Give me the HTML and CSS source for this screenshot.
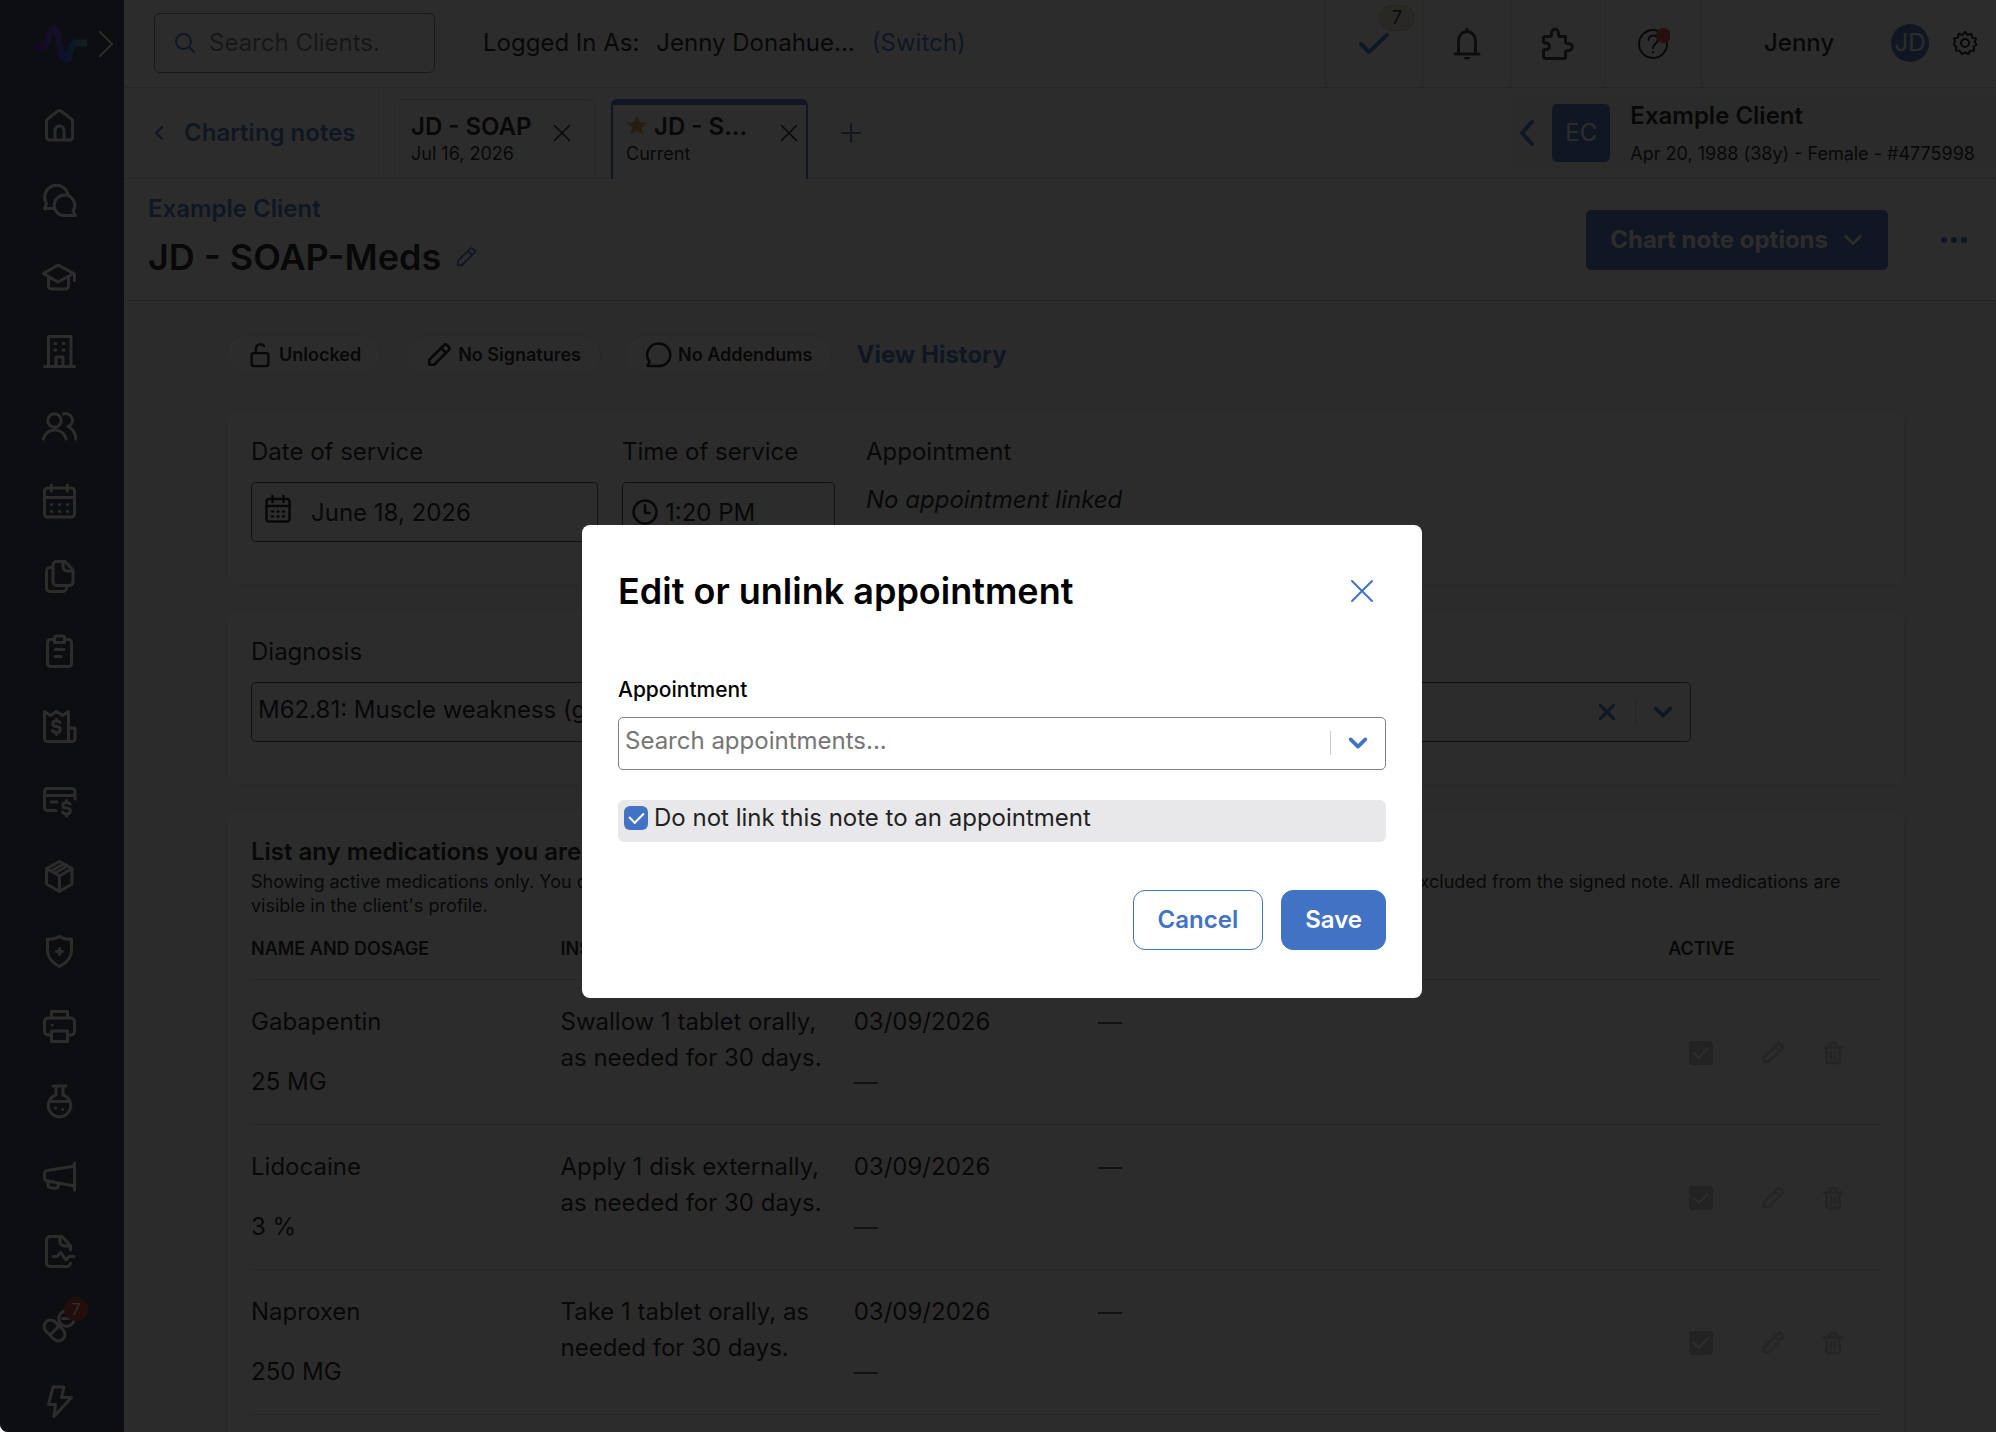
FILE: index.html
```html
<!DOCTYPE html>
<html lang="en">
<head>
    <meta charset="UTF-8">
    <title>JD - SOAP-Meds</title>
    <link rel="stylesheet" href="styles.css">
</head>
<body>
    <svg class="sprite" aria-hidden="true">
        <symbol id="pencil" viewBox="0 0 24 24"><path d="M3 21v-4.5L16.5 3a2.2 2.2 0 0 1 3 0l1.500 1.500a2.200 2.200 0 0 1 0 3L7.500 21zM14 5.500l4.500 4.500"/></symbol>
        <symbol id="trash" viewBox="0 0 24 24"><path d="M3 6.500h18M8 6.500V5a3 3 0 0 1 3-3h2a3 3 0 0 1 3 3v1.500M5.500 6.500V20a2 2 0 0 0 2 2h9a2 2 0 0 0 2-2V6.500M10 11v7M14 11v7"/></symbol>
        <symbol id="close" viewBox="0 0 24 24"><path d="M2 2l20 20M22 2L2 22"/></symbol>
        <symbol id="down" viewBox="0 0 24 24"><path d="M4 8l8 8 8-8"/></symbol>
        <symbol id="left" viewBox="0 0 24 24"><path d="M17 2L7 12l10 10"/></symbol>
    </svg>

    <div class="app">
        <aside class="sidebar">
            <div class="brand">
                <svg class="logo" viewBox="0 0 54 40">
                    <defs>
                        <linearGradient id="pulse" x1="0" y1="0" x2="1" y2="0">
                            <stop offset="0" stop-color="#5a14c8"/>
                            <stop offset=".4" stop-color="#6a3ad8"/>
                            <stop offset=".6" stop-color="#2450e8"/>
                            <stop offset="1" stop-color="#3cb4c0"/>
                        </linearGradient>
                    </defs>
                    <path d="M4 22.500h4c6 0 6-4 8-11 2-9 7-9 9 0l4 19c1 7 6 7 7 0 2-9 3-11.500 8-11.500h7" fill="none" stroke="url(#pulse)" stroke-width="7" stroke-linecap="round" stroke-linejoin="round"/>
                </svg>
                <svg class="expand" viewBox="0 0 14 26"><path d="M1 1l12 12L1 25"/></svg>
            </div>
            <nav class="nav">
                <a href="#" aria-label="Home"><svg viewBox="0 0 36 36"><path d="M5.500 29V13.500c0-1 .4-2 1.300-2.600L16.800 3a2.500 2.500 0 0 1 3 0l10.600 7.900c.8.6 1.200 1.500 1.200 2.600V29a3 3 0 0 1-3 3H8.500a3 3 0 0 1-3-3zM14 32V22.500a4.500 4.500 0 0 1 9 0V32"/></svg></a>
                <a href="#" aria-label="Messages"><svg viewBox="0 0 36 36"><path d="M26.500 10A11.800 11.800 0 1 0 5.500 20.500L3.500 25.500H12"/><path d="M23.500 12a10.300 10.300 0 1 0 0 20.600H34.500l-2.500-4.500a10.300 10.300 0 0 0-8.500-16.100z"/></svg></a>
                <a href="#" aria-label="Programs"><svg viewBox="0 0 36 36"><path d="M2.500 15.500L17 7l15.500 8.500L17 24zM7.500 19v9a3 3 0 0 0 3 3h14a3 3 0 0 0 3-3v-9M32.500 15.500q1 0 1 1.500v5.500"/></svg></a>
                <a href="#" aria-label="Organization"><svg viewBox="0 0 36 36"><path d="M7.500 33.500v-30h22.500v30M3.500 33.500h30M15 33.500V24h7v9.500M14 10.500h1M22 10.500h1M14 17h1M22 17h1"/></svg></a>
                <a href="#" aria-label="Clients"><svg viewBox="0 0 36 36"><circle cx="13.500" cy="12.500" r="6.700"/><path d="M2.500 31a11.500 11.500 0 0 1 22.500 0M22.500 6a6.500 6.500 0 0 1 4.500 12.500c4 2 7.500 6.500 8 12.500"/></svg></a>
                <a href="#" aria-label="Calendar"><svg viewBox="0 0 36 36"><rect x="3.500" y="5" width="30" height="29" rx="3"/><path d="M3.500 14.500h30M10.500 2v6M26.500 2v6M10.500 21.500h.1M18.500 21.500h.1M26.500 21.500h.1M10.500 28.500h.1M18.500 28.500h.1M26.500 28.500h.1"/></svg></a>
                <a href="#" aria-label="Documents"><svg viewBox="0 0 36 36"><path d="M15.500 3.500H24l8 8.500v12a3.500 3.500 0 0 1-3.500 3.500h-13A3.500 3.500 0 0 1 12 24V7a3.500 3.500 0 0 1 3.500-3.500zM22 4v4.500a4.500 4.500 0 0 0 4.500 4.500H32M12 9.500H9A3.500 3.500 0 0 0 5.500 13v17A3.500 3.500 0 0 0 9 33.500h13a3.500 3.500 0 0 0 3.500-3.500v-2"/></svg></a>
                <a href="#" aria-label="Forms"><svg viewBox="0 0 36 36"><path d="M13 6.500h-3.500a3 3 0 0 0-3 3v21a3 3 0 0 0 3 3h18a3 3 0 0 0 3-3v-21a3 3 0 0 0-3-3H24M14 16.500h9M14 23.500h6"/><path d="M15.500 3h6a2 2 0 0 1 2 2v4.500h-10V5a2 2 0 0 1 2-2z"/></svg></a>
                <a href="#" aria-label="Billing"><svg viewBox="0 0 36 36"><path d="M3.500 3.500l6 4 6-4 6 4 6-4v30H6.500a3 3 0 0 1-3-3zM27.500 20h6.500v10.500a3 3 0 0 1-3 3h-3.500M19 14.500q-1-1.500-3.500-1.500c-5 0-5 5.500 0 5.500s5 6 0 6q-3 0-4-2M15.500 11v2M15.500 24.500v2"/></svg></a>
                <a href="#" aria-label="Payments"><svg viewBox="0 0 36 36"><path d="M34 16V8.500a3 3 0 0 0-3-3H6.500a3 3 0 0 0-3 3v16a3 3 0 0 0 3 3H15M3.500 12.500H34M10 19h6M29 21q-1-1.500-3.500-1.500c-5 0-5 5.500 0 5.500s5 6 0 6q-3 0-4-2M25.500 17.500v2M25.500 31v2"/></svg></a>
                <a href="#" aria-label="Products"><svg viewBox="0 0 36 36"><path d="M18.500 3.500L31 10.500v15.500l-12.500 7.500L5.500 26V10.500zM5.500 10.500l13 7.500L31 10.500M18.500 18v15.500M10 13l12.500-7M14 15l12.500-7"/></svg></a>
                <a href="#" aria-label="Insurance"><svg viewBox="0 0 36 36"><path d="M18.500 3.500c3 2 7.500 3 12 2.500V17c0 8-5 13-12 16.500C11.500 30 6.500 25 6.500 17V6c4.500.5 9-.5 12-2.500zM18.500 15.500v6M15.500 18.500h6"/></svg></a>
                <a href="#" aria-label="Fax"><svg viewBox="0 0 36 36"><path d="M10.500 10V3.500h16V10M10.500 27H7a3.500 3.500 0 0 1-3.500-3.500v-10A3.500 3.500 0 0 1 7 10h23a3.500 3.500 0 0 1 3.500 3.500v10A3.500 3.500 0 0 1 30 27h-3.500M10.500 23h16v10.500h-16z"/><path d="M11 17h.1"/></svg></a>
                <a href="#" aria-label="Labs"><svg viewBox="0 0 36 36"><path d="M12 3h13M15 3v9a11.200 11.200 0 1 0 7 0V3M8 18.500h21M14.500 25h.1M21.500 26.500h.1"/></svg></a>
                <a href="#" aria-label="Campaigns"><svg viewBox="0 0 36 36"><path d="M33.500 5v27M33.500 8L6.500 12.500a3 3 0 0 0-3 3V20a3 3 0 0 0 3 3l27 5M7 23v4a2.500 2.500 0 0 0 2 2.500l5 .8c2 .3 3.500-1 3.500-3V25"/></svg></a>
                <a href="#" aria-label="Reports"><svg viewBox="0 0 36 36"><path d="M29.500 30.500c-.5 2-2 3-4 3H9A3.500 3.500 0 0 1 5.500 30V7A3.500 3.500 0 0 1 9 3.500h12l8.500 9V17M19 4v4.500a4.500 4.500 0 0 0 4.500 4.500h6M12 23.500h4l3.500-4 5.500 7.500 3-3.500h5"/></svg></a>
                <a href="#" aria-label="Prescriptions">
                    <svg viewBox="0 0 36 36"><circle cx="25.500" cy="10.500" r="7.800"/><path d="M21.500 10.500h8"/><rect class="capsule" x="1.500" y="16" width="24" height="13" rx="6.500" transform="rotate(45 13.500 22.500)"/><path d="M18 18L9 27"/></svg>
                    <span class="nav-badge">7</span>
                </a>
                <a href="#" aria-label="Automations"><svg viewBox="0 0 36 36"><path d="M12 4h11l-2.500 10.500H30.500L13 33.500l1.500-12H7.500z"/></svg></a>
            </nav>
        </aside>

        <div class="page">
            <header class="topbar">
                <label class="search">
                    <svg viewBox="0 0 20 20"><circle cx="8.500" cy="8.500" r="7.500"/><path d="M14 14l5 5"/></svg>
                    <input type="search" placeholder="Search Clients." aria-label="Search Clients">
                </label>
                <p class="logged">
                    <span>Logged In As:</span>
                    <span>Jenny Donahue...</span>
                    <a href="#">(Switch)</a>
                </p>
                <div class="tools">
                    <button class="tool tasks" aria-label="Tasks">
                        <svg viewBox="0 0 32 24"><path d="M3 12l8 8L29 3"/></svg>
                        <span class="task-badge">7</span>
                    </button>
                    <button class="tool bell" aria-label="Notifications">
                        <svg viewBox="0 0 28 34"><path d="M2 27h24M5.500 26V14a8.500 9.500 0 0 1 17 0v12M14 2v2"/><path class="solid" d="M10.500 30h7a3.500 2.500 0 0 1-7 0z"/></svg>
                    </button>
                    <button class="tool puzzle" aria-label="Integrations">
                        <svg viewBox="0 0 34 34"><path d="M4 9.500h5c1.500 0 1.500-1 1.500-3 0-6 7-6 7 0 0 2 0 3 1.500 3h5.500v5c0 1.500 1 2 3 2 5 0 5 7 0 7-2 0-3 .5-3 2v4.500q0 1.500-1.500 1.500H4.500Q2.500 31.500 2.500 29.500V24c0-2 1-1.500 2.500-1.500 4.500 0 4.500-6.500 0-6.500-1.500 0-2.500 0-2.500-2v-3q0-1.500 1.500-1.500z"/></svg>
                    </button>
                    <button class="tool help" aria-label="Help">
                        <svg viewBox="0 0 34 34"><circle cx="17" cy="17" r="14"/><path d="M12.500 13c0-6 9.500-6 9.500-.5 0 4-5 4-5 8.500M17 25v.5"/><circle class="dot" cx="27.500" cy="8.500" r="7.500"/></svg>
                    </button>
                </div>
                <div class="user">
                    <span class="user-name">Jenny</span>
                    <span class="user-avatar">JD</span>
                    <svg class="gear" viewBox="0 0 24 24"><path d="M12 1l2.500 3 3.800-1.200.9 3.900 3.800.8-1.200 3.500 2 2.500-3 2 .2 4-3.700.3-2 3.200L12 21.300 8.700 23l-2-3.200-3.700-.3.200-4-3-2 2-2.500L1 7.500l3.800-.8.900-3.900L9.500 4z"/><circle cx="12" cy="12" r="4"/></svg>
                </div>
            </header>

            <div class="tabbar">
                <a class="back" href="#">
                    <svg viewBox="0 0 24 24"><use href="#left"/></svg>
                    Charting notes
                </a>
                <div class="tab">
                    <div><strong>JD - SOAP</strong><small>Jul 16, 2026</small></div>
                    <button aria-label="Close tab"><svg viewBox="0 0 24 24"><use href="#close"/></svg></button>
                </div>
                <div class="tab active">
                    <div>
                        <strong>
                            <svg class="star" viewBox="0 0 22 20"><path d="M11 0l2.800 7.300 8.200.4-6.400 4.800L17.800 20 11 15.800 4.200 20l2.200-7.500L0 7.700l8.200-.4z"/></svg>
                            JD - S...
                        </strong>
                        <small>Current</small>
                    </div>
                    <button aria-label="Close tab"><svg viewBox="0 0 24 24"><use href="#close"/></svg></button>
                </div>
                <button class="add" aria-label="Add tab"><svg viewBox="0 0 20 20"><path d="M10 1v18M1 10h18"/></svg></button>
                <div class="client">
                    <svg class="client-arrow" viewBox="0 0 16 26"><path d="M13 2L3 13l10 11"/></svg>
                    <span class="client-avatar">EC</span>
                    <div class="client-info">
                        <strong>Example Client</strong>
                        <small>Apr 20, 1988 (38y) - Female - #4775998</small>
                    </div>
                </div>
            </div>

            <div class="note-header">
                <div class="note-title">
                    <a class="crumb" href="#">Example Client</a>
                    <h1>JD - SOAP-Meds <svg viewBox="0 0 24 24"><use href="#pencil"/></svg></h1>
                </div>
                <button class="options">Chart note options <svg viewBox="0 0 24 24"><use href="#down"/></svg></button>
                <button class="more" aria-label="More"><svg viewBox="0 0 28 8"><circle cx="4" cy="4" r="3"/><circle cx="14" cy="4" r="3"/><circle cx="24" cy="4" r="3"/></svg></button>
            </div>

            <main class="content">
                <div class="status">
                    <span class="pill"><svg viewBox="0 0 24 28"><rect x="3" y="12" width="18" height="14" rx="2.500"/><path d="M7.500 12V7.500a5 5 0 0 1 9-3"/></svg>Unlocked</span>
                    <span class="pill"><svg viewBox="0 0 24 24"><use href="#pencil"/></svg>No Signatures</span>
                    <span class="pill"><svg viewBox="0 0 26 26"><path d="M13 1.500a11.300 11.300 0 1 1 0 22.600H1.500l2-4.500A11.300 11.300 0 0 1 13 1.500z"/></svg>No Addendums</span>
                    <a href="#">View History</a>
                </div>

                <section class="card service">
                    <div class="field date">
                        <label for="date">Date of service</label>
                        <div class="box">
                            <svg viewBox="0 0 26 28"><rect x="1.500" y="4" width="23" height="22.500" rx="2.500"/><path d="M1.500 11h23M7.500 1v6M18.500 1v6M7 16.500h1M12.500 16.500h1M18 16.500h1M7 21.500h1M12.500 21.500h1M18 21.500h1"/></svg>
                            <input id="date" type="text" value="June 18, 2026">
                        </div>
                    </div>
                    <div class="field time">
                        <label for="time">Time of service</label>
                        <div class="box">
                            <svg viewBox="0 0 26 26"><circle cx="13" cy="13" r="11.500"/><path d="M13 6v8h4.500"/></svg>
                            <input id="time" type="text" value="1:20 PM">
                        </div>
                    </div>
                    <div class="field">
                        <span>Appointment</span>
                        <em>No appointment linked</em>
                    </div>
                </section>

                <section class="card">
                    <div class="field diagnosis">
                        <label for="diagnosis">Diagnosis</label>
                        <div class="dropdown">
                            <select id="diagnosis"><option>M62.81: Muscle weakness (generalized)</option></select>
                            <button aria-label="Clear diagnosis"><svg viewBox="0 0 24 24"><use href="#close"/></svg></button>
                            <span class="divider"></span>
                            <svg class="arrow" viewBox="0 0 24 24"><use href="#down"/></svg>
                        </div>
                    </div>
                </section>

                <section class="card">
                    <h2>List any medications you are currently taking</h2>
                    <p class="hint">Showing active medications only. You can also add, edit or remove medications from this list at any time. All inactive medications will be excluded from the signed note. All medications are visible in the client's profile.</p>
                    <table class="meds">
                        <thead>
                            <tr>
                                <th class="col-name">Name and dosage</th>
                                <th class="col-instructions">Instructions</th>
                                <th class="col-dates">Dates</th>
                                <th class="col-comments">Comments</th>
                                <th class="col-active">Active</th>
                                <th></th>
                            </tr>
                        </thead>
                        <tbody>
                            <tr>
                                <td><p>Gabapentin</p><p>25 MG</p></td>
                                <td>Swallow 1 tablet orally, as needed for 30 days.</td>
                                <td><p>03/09/2026</p><p class="empty">—</p></td>
                                <td class="empty">—</td>
                                <td class="col-active"><input type="checkbox" aria-label="Gabapentin active" checked disabled></td>
                                <td class="actions"><button aria-label="Edit"><svg viewBox="0 0 24 24"><use href="#pencil"/></svg></button><button aria-label="Delete"><svg viewBox="0 0 24 24"><use href="#trash"/></svg></button></td>
                            </tr>
                            <tr>
                                <td><p>Lidocaine</p><p>3 %</p></td>
                                <td>Apply 1 disk externally, as needed for 30 days.</td>
                                <td><p>03/09/2026</p><p class="empty">—</p></td>
                                <td class="empty">—</td>
                                <td class="col-active"><input type="checkbox" aria-label="Lidocaine active" checked disabled></td>
                                <td class="actions"><button aria-label="Edit"><svg viewBox="0 0 24 24"><use href="#pencil"/></svg></button><button aria-label="Delete"><svg viewBox="0 0 24 24"><use href="#trash"/></svg></button></td>
                            </tr>
                            <tr>
                                <td><p>Naproxen</p><p>250 MG</p></td>
                                <td>Take 1 tablet orally, as needed for 30 days.</td>
                                <td><p>03/09/2026</p><p class="empty">—</p></td>
                                <td class="empty">—</td>
                                <td class="col-active"><input type="checkbox" aria-label="Naproxen active" checked disabled></td>
                                <td class="actions"><button aria-label="Edit"><svg viewBox="0 0 24 24"><use href="#pencil"/></svg></button><button aria-label="Delete"><svg viewBox="0 0 24 24"><use href="#trash"/></svg></button></td>
                            </tr>
                        </tbody>
                    </table>
                </section>
            </main>
        </div>
    </div>

    <div class="overlay">
        <form class="modal" role="dialog" aria-labelledby="modal-title">
            <div class="modal-head">
                <h2 id="modal-title">Edit or unlink appointment</h2>
                <button type="button" aria-label="Close"><svg viewBox="0 0 24 24"><use href="#close"/></svg></button>
            </div>
            <label class="modal-label" for="appointment">Appointment</label>
            <div class="dropdown">
                <select id="appointment"><option>Search appointments...</option></select>
                <span class="divider"></span>
                <svg class="arrow" viewBox="0 0 24 24"><use href="#down"/></svg>
            </div>
            <label class="unlink"><input type="checkbox" checked> Do not link this note to an appointment</label>
            <div class="modal-actions">
                <button type="button" class="cancel">Cancel</button>
                <button type="submit" class="save">Save</button>
            </div>
        </form>
    </div>
</body>
</html>
```
FILE: styles.css
```css
* {
    box-sizing: border-box;
}

body {
    margin: 0;
    height: 100vh;
    overflow: hidden;
    font-family: Inter, sans-serif;
    font-size: 24px;
    line-height: 36px;
    color: #111;
    background-color: #fff;
}

h1, h2, p {
    margin: 0;
}

a {
    color: #4272c3;
    text-decoration: none;
}

button, input, select {
    font: inherit;
    color: inherit;
}

button {
    display: flex;
    align-items: center;
    justify-content: center;
    padding: 0;
    border: none;
    background: none;
    cursor: pointer;
}

small {
    font-size: 18px;
    line-height: 24px;
}

strong {
    font-weight: 600;
}

svg {
    flex: none;
    fill: none;
    stroke: currentColor;
    stroke-width: 2;
    stroke-linecap: round;
    stroke-linejoin: round;
}

.sprite {
    display: none;
}

.app {
    display: flex;
    height: 100%;
    overflow: hidden;
}

/* Sidebar */
.sidebar {
    flex: none;
    width: 124px;
    background-color: #2e3650;
    border-bottom-left-radius: 8px;
    color: #fff;
}

.brand {
    display: flex;
    align-items: center;
    justify-content: flex-end;
    gap: 12px;
    height: 88px;
    padding-right: 11px;
}

.logo {
    width: 54px;
    height: 40px;
}

.expand {
    width: 14px;
    height: 26px;
}

.nav {
    display: flex;
    flex-direction: column;
    align-items: center;
    gap: 39px;
    padding: 20px 6px 0 0;
}

.nav a {
    position: relative;
    height: 36px;
    color: #fff;
}

.nav svg {
    width: 36px;
    height: 36px;
    stroke-width: 3;
}

.nav .capsule {
    fill: #2e3650;
}

.nav-badge {
    position: absolute;
    top: -11px;
    right: -11px;
    width: 24px;
    height: 24px;
    border-radius: 50%;
    background-color: #c8372f;
    font-size: 16px;
    line-height: 24px;
    text-align: center;
}

/* Top bar */
.page {
    flex: 1;
    min-width: 0;
    display: flex;
    flex-direction: column;
}

.topbar {
    flex: none;
    display: flex;
    height: 88px;
    border-bottom: 1px solid #d8d8d8;
}

.search {
    display: flex;
    align-items: center;
    gap: 14px;
    width: 281px;
    height: 60px;
    margin: 13px 0 0 30px;
    padding: 0 20px;
    border: 1px solid #858585;
    border-radius: 6px;
}

.search svg {
    width: 20px;
    height: 20px;
    color: #4272c3;
}

.search input {
    width: 100%;
    min-width: 0;
    padding: 0;
    border: none;
    outline: none;
    background: none;
}

.search input::placeholder {
    color: #757575;
}

.logged {
    display: flex;
    align-items: center;
    gap: 17px;
    margin-left: 48px;
    padding-bottom: 2px;
}

.tools {
    display: flex;
    margin-left: auto;
}

.tool {
    position: relative;
    border-left: 1px solid #d8d8d8;
    color: #2e3448;
}

.tasks {
    width: 97px;
    color: #4272c3;
}

.tasks svg {
    width: 32px;
    height: 24px;
    stroke-width: 4;
}

.task-badge {
    position: absolute;
    top: 5px;
    right: 7px;
    width: 36px;
    height: 26px;
    border: 1px solid #d8c8a4;
    border-radius: 13px;
    background-color: #efe2c6;
    color: #222;
    font-size: 18px;
    line-height: 24px;
}

.bell {
    width: 88px;
}

.bell svg {
    width: 28px;
    height: 34px;
    stroke-width: 3;
}

.bell .solid {
    fill: currentColor;
    stroke: none;
}

.puzzle {
    width: 94px;
}

.puzzle svg {
    width: 34px;
    height: 34px;
    stroke-width: 3;
}

.help {
    width: 97px;
    color: #111;
}

.help svg {
    width: 34px;
    height: 34px;
}

.help .dot {
    fill: #d9363e;
    stroke: none;
}

.user {
    display: flex;
    align-items: center;
    width: 295px;
    padding: 0 19px 2px 62px;
    border-left: 1px solid #d8d8d8;
}

.user-name {
    margin-right: auto;
    font-weight: 500;
}

.user-avatar {
    width: 38px;
    height: 38px;
    margin-right: 24px;
    border-radius: 50%;
    background-color: #4272c3;
    color: #fff;
    line-height: 38px;
    text-align: center;
}

.gear {
    width: 24px;
    height: 24px;
}

/* Tabs */
.tabbar {
    flex: none;
    display: flex;
    align-items: flex-end;
    height: 91px;
    border-bottom: 1px solid #d8d8d8;
}

.back {
    display: flex;
    align-items: center;
    gap: 17px;
    width: 256px;
    height: 90px;
    padding-left: 27px;
    border-right: 1px solid #d8d8d8;
    font-weight: 600;
}

.back svg {
    width: 16px;
    height: 14px;
    stroke-width: 4;
}

.tab {
    display: flex;
    align-items: flex-start;
    justify-content: space-between;
    width: 200px;
    height: 79px;
    margin-left: 15px;
    padding: 12px 23px 0 15px;
    border: 1px solid #d8d8d8;
    border-bottom: none;
    border-radius: 6px 6px 0 0;
}

.tab strong, .tab small {
    display: block;
}

.tab strong {
    line-height: 30px;
}

.tab button {
    margin-top: 12px;
}

.tab button svg {
    width: 18px;
    height: 18px;
}

.tab.active {
    width: 197px;
    height: 80px;
    margin: 0 0 -1px 16px;
    padding: 7px 8px 0 13px;
    border: 2px solid #4272c3;
    border-top-width: 6px;
    border-bottom: none;
    background-color: #fff;
}

.tab .star {
    width: 22px;
    height: 20px;
    fill: #cfa04a;
    stroke: none;
}

.add {
    height: 90px;
    margin-left: 33px;
    color: #4272c3;
}

.add svg {
    width: 20px;
    height: 20px;
}

.client {
    display: flex;
    align-items: center;
    height: 84px;
    margin: 0 0 3px auto;
    padding: 0 21px 0 8px;
    background-color: #f7f7f7;
}

.client-arrow {
    width: 16px;
    height: 26px;
    color: #4272c3;
    stroke-width: 4;
}

.client-avatar {
    width: 58px;
    height: 58px;
    margin: 0 20px 0 17px;
    border-radius: 5px;
    background-color: #4272c3;
    color: #fff;
    line-height: 58px;
    text-align: center;
}

.client-info {
    padding-bottom: 3px;
}

.client-info strong, .client-info small {
    display: block;
}

.client-info small {
    margin-top: 8px;
}

/* Note header */
.note-header {
    flex: none;
    display: flex;
    align-items: center;
    height: 122px;
    padding: 0 28px 0 24px;
    border-bottom: 1px solid #d8d8d8;
}

.note-title {
    padding-bottom: 7px;
}

.crumb {
    display: block;
    font-weight: 600;
}

.note-header h1 {
    display: flex;
    align-items: center;
    gap: 14px;
    margin-top: 6px;
    font-size: 36px;
    line-height: 48px;
    font-weight: 600;
}

.note-header h1 svg {
    width: 22px;
    height: 22px;
    color: #4272c3;
}

.options {
    gap: 14px;
    height: 60px;
    margin-left: auto;
    padding: 0 24px;
    border-radius: 5px;
    background-color: #4272c3;
    color: #fff;
    font-weight: 700;
}

.options svg {
    width: 22px;
    height: 22px;
    stroke-width: 3;
}

.more {
    margin-left: 52px;
    color: #4272c3;
}

.more svg {
    width: 28px;
    height: 8px;
    fill: currentColor;
    stroke: none;
}

/* Content */
.content {
    flex: 1;
    min-height: 0;
    overflow: hidden;
    padding: 34px 91px 0 102px;
    background-color: #f9f9f9;
}

.status {
    display: flex;
    align-items: center;
    gap: 24px;
    margin-bottom: 34px;
}

.status a {
    font-weight: 700;
}

.pill {
    display: flex;
    align-items: center;
    gap: 6px;
    height: 40px;
    padding: 0 19px 0 20px;
    border: 1px solid #e0e0e0;
    border-radius: 20px;
    background-color: #fff;
    font-size: 18px;
    font-weight: 600;
}

.pill svg {
    width: 26px;
    height: 26px;
    stroke-width: 2.5;
}

.card {
    margin-bottom: 24px;
    padding: 24px;
    border: 1px solid #e0e0e0;
    border-radius: 12px;
    background-color: #fff;
}

.service {
    display: flex;
    gap: 24px;
}

.field {
    display: flex;
    flex-direction: column;
    min-height: 126px;
}

.field label, .field > span {
    margin-bottom: 12px;
}

.date {
    width: 347px;
}

.time {
    width: 213px;
    margin-right: 7px;
}

.box {
    display: flex;
    align-items: center;
    height: 60px;
    border: 1px solid #555;
    border-radius: 4px;
}

.box input {
    flex: 1;
    min-width: 0;
    padding: 2px 0 0;
    border: none;
    outline: none;
    background: none;
}

.box svg {
    width: 26px;
    height: 28px;
    margin: 0 20px 6px 13px;
    stroke-width: 2.5;
}

.time .box svg {
    margin: 0 7px 0 9px;
}

.dropdown {
    display: flex;
    align-items: center;
    border: 1px solid #808080;
    border-radius: 5px;
}

.dropdown select {
    flex: 1;
    align-self: stretch;
    min-width: 0;
    padding: 0 0 5px 6px;
    border: none;
    outline: none;
    background: none;
    appearance: none;
}

.dropdown button {
    margin-right: 20px;
    color: #4272c3;
}

.dropdown button svg {
    width: 16px;
    height: 16px;
    stroke-width: 5;
}

.divider {
    width: 1px;
    height: 24px;
    background-color: #ccc;
}

.arrow {
    width: 22px;
    height: 22px;
    margin: 0 16px;
    color: #4272c3;
    stroke-width: 4;
}

.diagnosis {
    width: 1440px;
    max-width: 100%;
}

.diagnosis .dropdown {
    height: 60px;
    border-color: #555;
}

.card h2 {
    font-size: 24px;
    font-weight: 600;
}

.hint {
    font-size: 18px;
    line-height: 24px;
}

/* Medications */
.meds {
    width: 100%;
    margin-top: 7px;
    border-collapse: collapse;
    table-layout: fixed;
}

.meds th {
    padding: 6px 0 12px;
    border-bottom: 1px solid #d8d8d8;
    font-size: 18px;
    font-weight: 600;
    text-align: left;
    text-transform: uppercase;
}

.meds td {
    padding: 24px 24px 24px 0;
    border-bottom: 1px solid #d8d8d8;
    vertical-align: top;
}

.meds td p + p {
    margin-top: 24px;
}

.meds .empty {
    color: #555;
}

.col-name {
    width: 19%;
}

.col-instructions {
    width: 18%;
}

.col-dates {
    width: 15%;
}

.col-comments {
    width: 35%;
}

.meds .col-active {
    width: 4%;
    padding-right: 0;
    text-align: center;
    vertical-align: middle;
}

.meds .actions {
    padding-left: 28px;
    vertical-align: middle;
}

.actions button {
    display: inline-flex;
    margin-right: 36px;
    color: #d0d0d0;
    vertical-align: middle;
}

.actions button + button {
    margin-right: 0;
}

.actions svg {
    width: 24px;
    height: 24px;
    stroke-width: 3;
}

input[type="checkbox"] {
    flex: none;
    display: grid;
    place-items: center;
    width: 24px;
    height: 24px;
    margin: 0;
    border-radius: 6px;
    background-color: #4272c3;
    appearance: none;
}

input[type="checkbox"]::before {
    content: "";
    width: 7px;
    height: 12px;
    margin-bottom: 4px;
    border: solid #fff;
    border-width: 0 2px 2px 0;
    transform: rotate(45deg);
}

.col-active input[type="checkbox"] {
    display: inline-grid;
    border-radius: 3px;
    background-color: #c4c4c4;
    vertical-align: middle;
}

/* Modal */
.overlay {
    position: fixed;
    inset: 0;
    display: flex;
    align-items: center;
    justify-content: center;
    padding: 90px 0 0 8px;
    border-bottom-left-radius: 8px;
    background-color: rgba(7, 7, 7, .85);
}

.modal {
    width: 840px;
    max-width: 100%;
    padding: 36px 36px 48px;
    border-radius: 8px;
    background-color: #fff;
}

.modal-head {
    display: flex;
    align-items: center;
    justify-content: space-between;
    height: 60px;
    margin-bottom: 51px;
    padding-right: 12px;
}

.modal-head h2 {
    font-size: 36px;
    line-height: 48px;
    font-weight: 600;
    color: #000;
}

.modal-head button {
    color: #4272c3;
}

.modal-head svg {
    width: 24px;
    height: 24px;
}

.modal-label {
    display: block;
    margin-bottom: 9px;
    font-size: 21px;
    font-weight: 500;
    color: #000;
}

.modal .dropdown {
    height: 53px;
}

.modal select {
    color: #757575;
}

.unlink {
    display: flex;
    align-items: center;
    gap: 6px;
    height: 42px;
    margin: 30px 0 48px;
    padding: 0 6px 6px;
    border-radius: 6px;
    background-color: #e8e8ea;
    color: #222;
}

.modal-actions {
    display: flex;
    justify-content: flex-end;
    gap: 18px;
}

.modal-actions button {
    height: 60px;
    padding: 0 24px;
    border: 1px solid #4272c3;
    border-radius: 12px;
    font-weight: 600;
}

.modal-actions .cancel {
    color: #4272c3;
}

.modal-actions .save {
    padding: 0 23px;
    background-color: #4272c3;
    color: #fff;
}
```
